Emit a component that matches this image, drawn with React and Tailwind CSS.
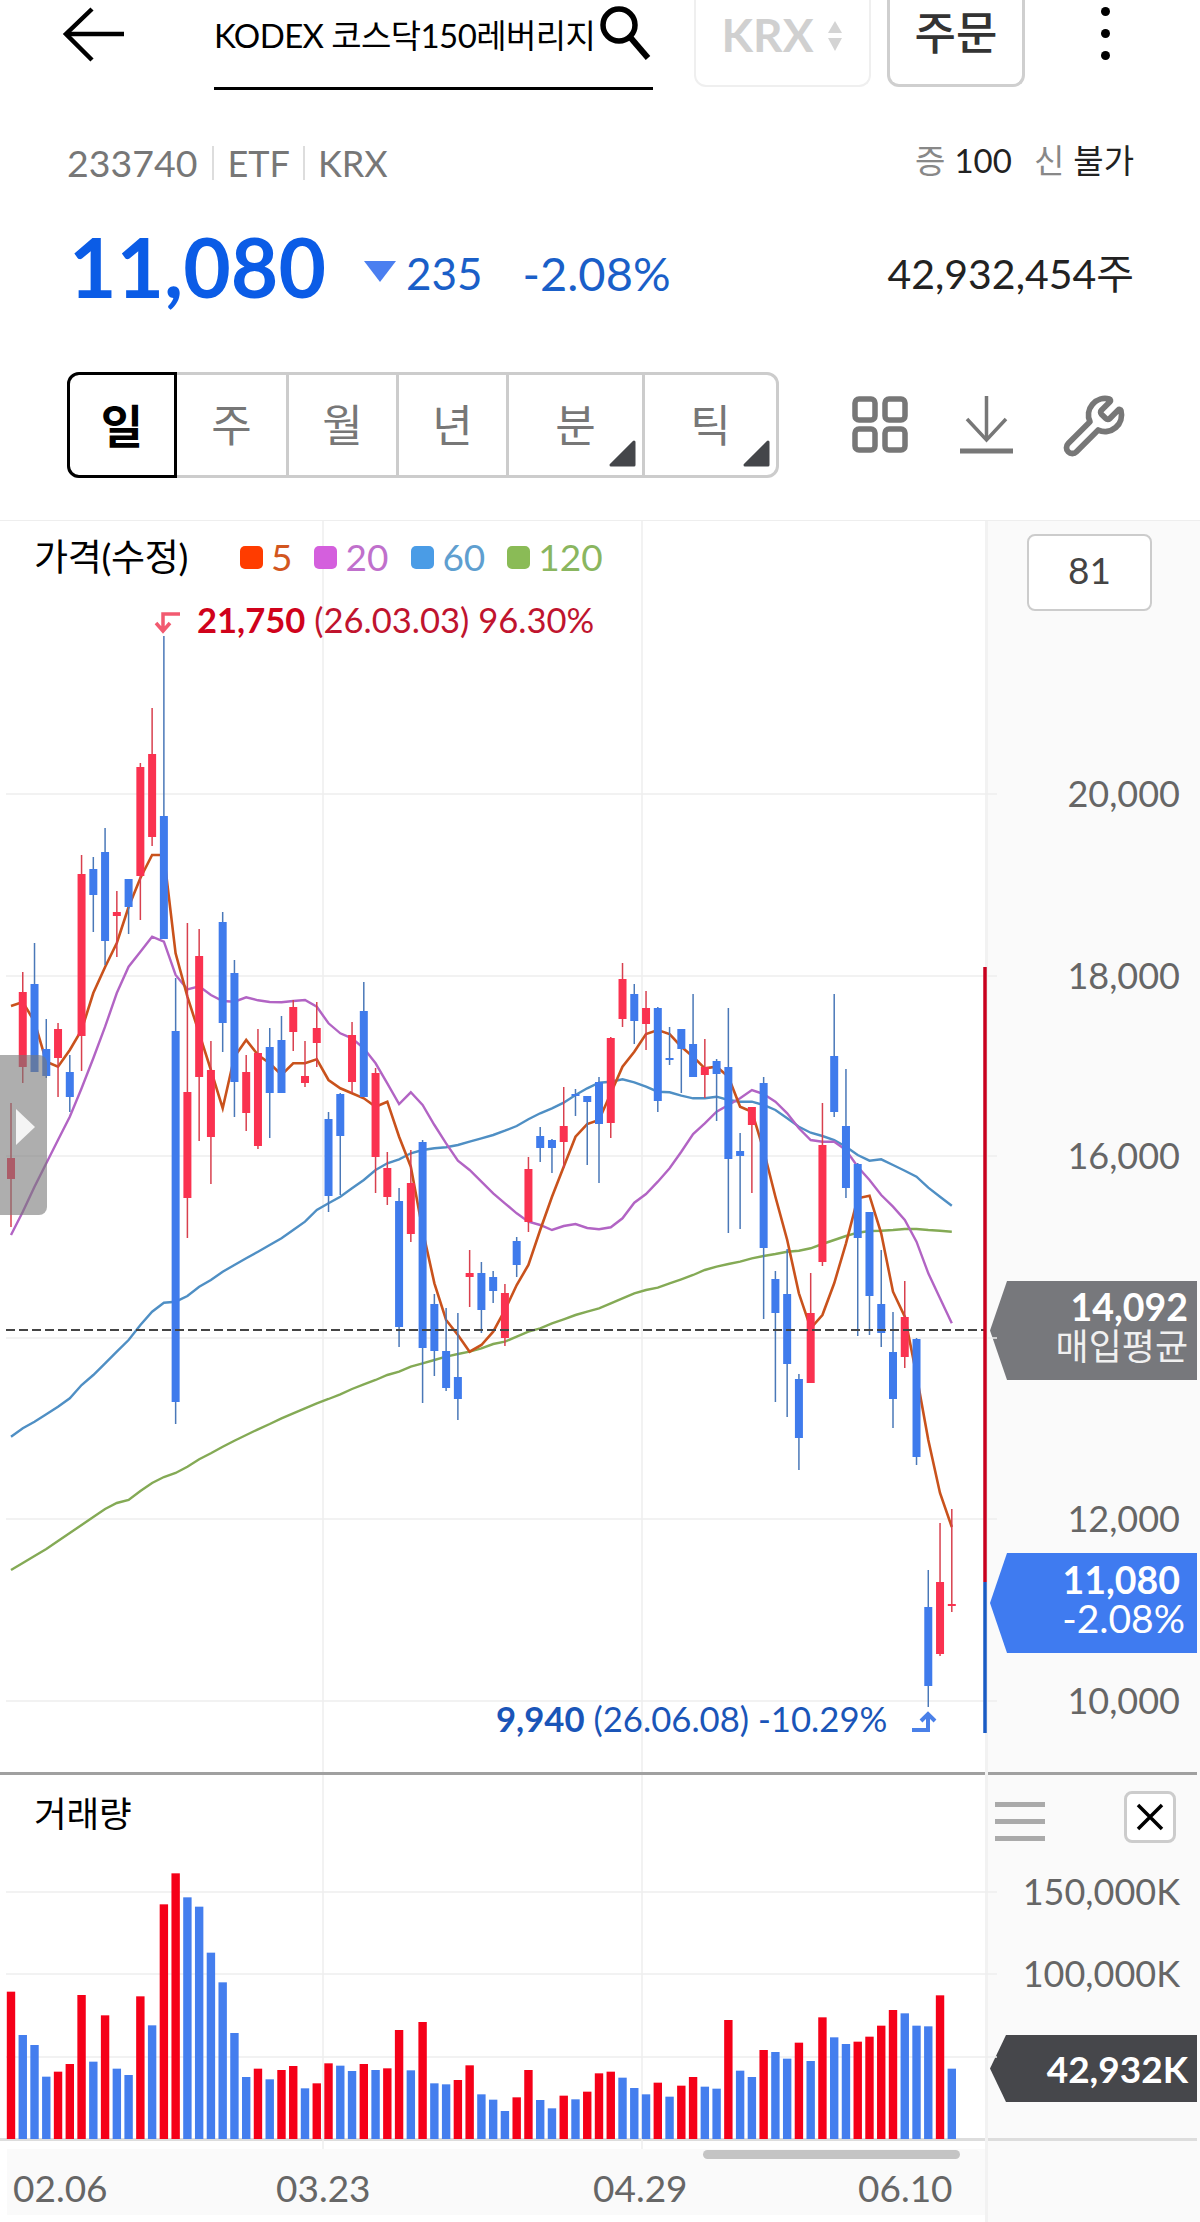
import React from 'react';
import { Wrench } from 'lucide-react';

// chart geometry, all y values are page pixels
const colX = (i) => 11 + 11.76 * i;
const z3 = (arr) => arr.map((z) => 1000 + z / 3);
const z4 = (arr) => arr.map((z) => 920 + z / 3);

const candles = [
  ['r', 1103, 1227, 1158, 1179], ['r', 972, 1083, 992, 1067], ['b', 943, 1072, 984, 1072], ['b', 1019, 1078, 1049, 1076],
  ['r', 1023, 1097, 1029, 1058], ['b', 1055, 1112, 1072, 1097], ['r', 855, 1071, 874, 1036], ['b', 857, 932, 869, 895],
  ['b', 828, 965, 852, 941], ['r', 891, 957, 912, 916], ['b', 879, 934, 879, 907], ['r', 763, 920, 767, 876],
  ['r', 708, 846, 754, 837], ['b', 636, 939, 816, 939], ['b', 978, 1424, 1031, 1402], ['r', 923, 1238, 1092, 1198],
  ['r', 929, 1141, 956, 1077], ['r', 1041, 1184, 1070, 1137], ['b', 912, 1052, 922, 1023], ['b', 960, 1117, 973, 1082],
  ['r', 1055, 1131, 1072, 1113], ['r', 1029, 1149, 1053, 1146], ['b', 1028, 1138, 1047, 1093], ['b', 1016, 1093, 1040, 1093],
  ['r', 1000, 1051, 1007, 1032], ['r', 1041, 1087, 1076, 1083], ['r', 1002, 1067, 1028, 1043], ['b', 1112, 1212, 1119, 1196],
  ['b', 1093, 1195, 1094, 1136], ['r', 1022, 1093, 1035, 1082], ['b', 982, 1097, 1011, 1097], ['r', 1068, 1193, 1073, 1157],
  ['r', 1152, 1205, 1168, 1197], ['b', 1188, 1347, 1201, 1327], ['r', 1150, 1242, 1183, 1234], ['b', 1140, 1403, 1142, 1348],
  ['b', 1294, 1376, 1304, 1351], ['b', 1308, 1391, 1351, 1388], ['b', 1313, 1420, 1377, 1399], ['r', 1250, 1307, 1273, 1277],
  ['b', 1262, 1333, 1273, 1310], ['b', 1271, 1303, 1277, 1291], ['r', 1284, 1346, 1293, 1338], ['b', 1237, 1277, 1241, 1265],
  ['r', 1157, 1232, 1169, 1222], ['b', 1127, 1162, 1136, 1148], ['b', 1139, 1173, 1140, 1148], ['r', 1087, 1168, 1126, 1142],
  ['b', 1089, 1116, 1094, 1096], ['b', 1096, 1165, 1096, 1102], ['b', 1077, 1183, 1082, 1124], ['r', 1037, 1138, 1038, 1123],
  ['r', 963, 1027, 979, 1019], ['b', 984, 1044, 994, 1021], ['r', 991, 1050, 1008, 1024], ['b', 1007, 1112, 1008, 1101],
  ['b', 1027, 1065, 1058, 1059], ['b', 1029, 1093, 1029, 1049], ['b', 994, 1077, 1044, 1077], ['r', 1039, 1098, 1067, 1075],
  ['b', 1059, 1121, 1061, 1074], ['b', 1008, 1233, 1067, 1159], ['b', 1133, 1229, 1151, 1156], ['r', 1107, 1193, 1107, 1125],
  ['b', 1077, 1319, 1083, 1248], ['b', 1271, 1402, 1279, 1313], ['b', 1249, 1417, 1294, 1364], ['b', 1374, 1470, 1379, 1438],
  ['r', 1273, 1383, 1313, 1383], ['r', 1103, 1266, 1145, 1262], ['b', 994, 1117, 1056, 1112], ['b', 1069, 1198, 1126, 1188],
  ['b', 1163, 1336, 1164, 1238], ['b', 1212, 1335, 1212, 1296], ['b', 1250, 1347, 1304, 1333], ['b', 1312, 1428, 1352, 1399],
  ['r', 1281, 1368, 1317, 1357], ['b', 1338, 1465, 1339, 1457], ['b', 1570, 1707, 1607, 1686], ['r', 1523, 1656, 1582, 1654],
  ['r', 1509, 1612, 1604, 1606],
];

const ma5 = [
  1006, 1002,
  ...z3([65, 185, 200, 150, 90, -21, -99, -171, -279, -366, -435, -435, -140, -10, 100, 210, 325, 170, 120, 165, 190, 225, 190, 190, 178, 240, 265, 280, 295, 320, 305, 410, 500, 690, 850, 960, 1005, 1055, 1035, 995]),
  ...z4([1170, 1095, 1035, 930, 830, 740, 650, 612, 600, 520, 440, 395, 342, 330, 342, 380, 410, 445, 440, 470, 560, 575, 690, 830, 960, 1120, 1225, 1185, 1090, 970, 835, 827, 940, 1115, 1190]),
  1375, 1440, 1493, 1527,
];
const ma20 = [
  ...z3([705, 635, 560, 490, 420, 350, 265, 175, 80, -21, -100, -145, -190, -175, -75, -32, -41, -15, 3, 5, -8, 1, 6, 7, 3, 0, 20, 70, 100, 115, 145, 190, 250, 312, 277, 315, 375, 430, 482, 510, 545, 580]),
  ...z4([850, 880, 905, 915, 930, 918, 912, 924, 928, 922, 895, 848, 822, 785, 745, 695, 642, 610, 575, 555, 535, 510, 522, 545, 580, 625, 660, 665, 665, 690, 740, 780, 825, 860, 900, 965, 1060, 1135, 1210]),
];
const ma60 = [
  ...z3([1310, 1285, 1265, 1243, 1220, 1195, 1155, 1125, 1090, 1055, 1020, 975, 935, 908, 905, 888, 860, 840, 815, 795, 775, 755, 735, 715, 690, 665, 630, 610, 590, 565, 540, 510, 490, 478, 460, 450, 445, 442, 435, 425, 415, 405]),
  ...z4([632, 618, 598, 580, 565, 548, 525, 505, 488, 485, 478, 487, 500, 515, 517, 527, 535, 535, 530, 540, 545, 545, 555, 570, 595, 620, 638, 648, 660, 680, 705, 722, 718, 735, 752, 770, 803, 830, 857]),
];
const ma120 = [
  1570, 1563, 1556, 1549, 1541, 1533, 1525, 1517, 1509, 1503, 1500, 1491, 1483, 1477, 1473,
  ...z3([1400, 1378, 1360, 1340, 1322, 1305, 1288, 1272, 1255, 1240, 1225, 1210, 1197, 1183, 1167, 1153, 1140, 1125, 1115, 1100, 1090, 1080, 1070, 1062, 1055, 1045, 1032]),
  ...z4([1265, 1250, 1235, 1225, 1210, 1198, 1185, 1175, 1165, 1150, 1135, 1120, 1110, 1103, 1090, 1078, 1065, 1050, 1040, 1032, 1025, 1015, 1008, 1002, 995, 992, 985, 972, 960, 948, 938, 933, 932, 930, 927, 927, 930, 932, 935]),
];

const volumes = [
  ['r', 755], ['b', 885], ['b', 915], ['b', 1010], ['r', 995], ['r', 972], ['r', 765], ['b', 965], ['r', 826], ['b', 986],
  ['b', 1005], ['r', 769], ['b', 856], ['r', 493], ['r', 400], ['b', 472], ['b', 500], ['b', 638], ['b', 727], ['b', 879],
  ['b', 1011], ['r', 986], ['b', 1018], ['r', 990], ['r', 978], ['b', 1045], ['r', 1030], ['r', 970], ['b', 977], ['b', 993],
  ['r', 972], ['b', 990], ['r', 985], ['r', 870], ['b', 991], ['r', 846], ['b', 1030], ['b', 1033], ['r', 1020], ['r', 976],
  ['b', 1063], ['b', 1079], ['b', 1113], ['r', 1072], ['r', 990], ['b', 1080], ['b', 1105], ['r', 1067], ['b', 1078], ['r', 1055],
  ['r', 1000], ['r', 995], ['b', 1013], ['b', 1044], ['b', 1063], ['r', 1028], ['b', 1070], ['r', 1037], ['r', 1011], ['b', 1040],
  ['b', 1046], ['r', 840], ['b', 992], ['b', 1011], ['r', 930], ['b', 936], ['b', 956], ['r', 908], ['b', 963], ['r', 832],
  ['b', 892], ['b', 912], ['r', 905], ['r', 890], ['r', 857], ['r', 810], ['b', 820], ['b', 857], ['b', 859], ['r', 766], ['b', 986],
];

const priceTicks = [
  { label: '20,000', y: 794 },
  { label: '18,000', y: 976 },
  { label: '16,000', y: 1156 },
  { label: '12,000', y: 1519 },
  { label: '10,000', y: 1701 },
];
const legend = [
  { label: '5', box: 'bg-[#ff3c00]', text: 'text-[#d2561e]', gap: 'ml-[49px]' },
  { label: '20', box: 'bg-[#d45fdd]', text: 'text-[#c070cc]', gap: 'ml-[22px]' },
  { label: '60', box: 'bg-[#4a9ce6]', text: 'text-[#5f9fd0]', gap: 'ml-[23px]' },
  { label: '120', box: 'bg-[#8abb56]', text: 'text-[#8ab65f]', gap: 'ml-[22px]' },
];
const tabs = [
  { label: '일', w: 'w-[110px]', active: true },
  { label: '주', w: 'w-[112px]' },
  { label: '월', w: 'w-[110px]' },
  { label: '년', w: 'w-[110px]' },
  { label: '분', w: 'w-[136px]', corner: true },
  { label: '틱', w: 'w-[131px]', corner: true, last: true },
];

const toPoints = (ys) => ys.map((y, i) => `${colX(i).toFixed(1)},${y.toFixed(1)}`).join(' ');

const App = () => {
  return (
    <div className="w-[1200px] h-[2222px] overflow-hidden bg-white font-['Lato','Noto_Sans_CJK_KR',sans-serif]">
      {/* Top bar */}
      <div className="flex h-[90px]">
        <div className="w-[214px] shrink-0">
          <svg width="214" height="70" fill="none" stroke="#000" strokeWidth="4.5">
            <path d="M124 34H68" />
            <path d="M92 9L66 34L92 60" />
          </svg>
        </div>
        <div className="flex w-[439px] h-[90px] border-b-[3px] border-black">
          <span className="mt-[15px] w-[384px] text-[33px] leading-[40px] whitespace-nowrap tracking-[-0.6px] text-black">KODEX 코스닥150레버리지</span>
          <svg width="54" height="64" fill="none" stroke="#000" strokeWidth="5.5">
            <circle cx="21" cy="25" r="16" />
            <path d="M32 37L50 58" strokeWidth="6" />
          </svg>
        </div>
        <div className="ml-[41px] flex items-start justify-center w-[177px] h-[87px] border-2 border-t-0 border-[#efefef] rounded-b-xl">
          <span className="mt-[10px] text-[46px] leading-[50px] font-bold text-[#d0d0d0]">KRX</span>
          <svg className="ml-[14px] mt-[21px]" width="16" height="30" fill="#d4d4d4">
            <path d="M8 0L15 12H1Z" />
            <path d="M8 30L15 17H1Z" />
          </svg>
        </div>
        <div className="ml-[16px] flex items-start justify-center w-[138px] h-[87px] border-[3px] border-t-0 border-[#cfcfcf] rounded-b-xl">
          <span className="mt-[8px] text-[45px] leading-[50px] font-medium text-[#333]">주문</span>
        </div>
        <div className="ml-[76px] flex flex-col gap-[13px] pt-[7px]">
          <div className="w-[9px] h-[9px] rounded-full bg-black" />
          <div className="w-[9px] h-[9px] rounded-full bg-black" />
          <div className="w-[9px] h-[9px] rounded-full bg-black" />
        </div>
      </div>

      {/* Code + market row */}
      <div className="mt-[52px] flex h-[42px] items-center justify-between pl-[67px] pr-[66px]">
        <div className="flex items-center text-[36px] leading-[42px] text-[#777]">
          <span className="text-[37.5px]">233740</span>
          <span className="mx-[14px] h-[34px] w-[2px] bg-[#ddd]" />
          <span>ETF</span>
          <span className="mx-[13px] h-[34px] w-[2px] bg-[#ddd]" />
          <span>KRX</span>
        </div>
        <div className="-mt-[6px] flex items-center text-[33px] leading-[42px] text-[#222]">
          <span className="text-[#888]">증</span>
          <span className="ml-[9px]">100</span>
          <span className="ml-[22px] text-[#888]">신</span>
          <span className="ml-[9px]">불가</span>
        </div>
      </div>

      {/* Price row */}
      <div className="mt-[48px] flex h-[74px] items-center pl-[69px] pr-[66px]">
        <span className="-mt-[6px] text-[82px] leading-[74px] font-bold text-[#0b5ce6]">11,080</span>
        <svg className="ml-[38px] mt-[5px]" width="32" height="22" fill="#4b7ff0">
          <path d="M0 0H32L16 21Z" />
        </svg>
        <span className="ml-[10px] mt-[7px] text-[44px] leading-[50px] text-[#1a5fc8]">235</span>
        <span className="ml-[40px] mt-[7px] text-[47px] leading-[50px] text-[#1a5fc8]">-2.08%</span>
        <span className="ml-auto mt-[9px] text-[41px] leading-[50px] text-[#222]">42,932,454주</span>
      </div>

      {/* Period tabs + tools */}
      <div className="mt-[66px] flex h-[106px] pl-[67px]">
        <div className="flex w-[712px] h-[106px] rounded-xl border-[3px] border-[#ccc]">
          {tabs.map((tab) => (
            <div
              key={tab.label}
              className={
                tab.active
                  ? `${tab.w} -my-[3px] -ml-[3px] flex items-center justify-center rounded-l-xl border-[3px] border-black text-[46px] font-bold text-black`
                  : `${tab.w} relative flex items-center justify-center text-[44px] text-[#777] ${tab.last ? '' : 'border-r-[3px] border-[#ccc]'}`
              }
            >
              {tab.label}
              {tab.corner && (
                <svg className="absolute right-[6px] bottom-[8px]" width="28" height="28" fill="#44464a" stroke="#44464a" strokeWidth="3" strokeLinejoin="round">
                  <path d="M26 3V26H3Z" />
                </svg>
              )}
            </div>
          ))}
        </div>
        <svg className="ml-[73px] mt-[24px]" width="56" height="57" fill="none" stroke="#777" strokeWidth="5.5">
          <rect x="3" y="3" width="20" height="21" rx="4" />
          <rect x="33" y="3" width="20" height="21" rx="4" />
          <rect x="3" y="33" width="20" height="21" rx="4" />
          <rect x="33" y="33" width="20" height="21" rx="4" />
        </svg>
        <svg className="ml-[52px] mt-[23px]" width="53" height="60" fill="none" stroke="#777" strokeWidth="3.5">
          <path d="M26.5 1V44" />
          <path d="M7 24L26.5 45L46 24" />
          <path d="M0 56H53" strokeWidth="5" />
        </svg>
        <Wrench className="ml-[48px] mt-[21px]" size={66} color="#777" strokeWidth={2.1} />
      </div>

      <div className="mt-[42px] h-[1px] bg-[#eee]" />

      <div className="flex h-[1701px]">
        {/* Plot column */}
        <div className="relative z-10 w-[985px] shrink-0">
          <div className="relative h-[1251px]">
            <svg className="block overflow-visible" width="985" height="1251" viewBox="0 521 985 1251" fill="none">
              {priceTicks.concat({ y: 1338 }).map((t) => (
                <path key={t.y} d={`M6 ${t.y}H997`} stroke="#eee" strokeWidth="1.5" />
              ))}
              <path d="M323 521V1772M642 521V1772" stroke="#eee" strokeWidth="1.5" />
              <polyline points={toPoints(ma120)} stroke="#84aa55" strokeWidth="2.4" />
              <polyline points={toPoints(ma60)} stroke="#4f8fc4" strokeWidth="2.4" />
              <polyline points={toPoints(ma20)} stroke="#b264c4" strokeWidth="2.4" />
              <polyline points={toPoints(ma5)} stroke="#c9521c" strokeWidth="2.6" />
              {candles.map(([c, wt, wb, bt, bb], i) => {
                const x = colX(i);
                return (
                  <g key={i}>
                    <path d={`M${x} ${wt}V${wb}`} stroke={c === 'r' ? '#d8404e' : '#4a78b8'} strokeWidth="1.5" />
                    <rect x={x - 4} y={bt} width="8" height={Math.max(bb - bt, 2)} fill={c === 'r' ? '#fa3250' : '#3f7bec'} />
                  </g>
                );
              })}
              <path d="M6 1330H985" stroke="#444" strokeWidth="2" strokeDasharray="9 4" />
              <path d="M985 967V1582" stroke="#c8001e" strokeWidth="3.5" />
              <path d="M985 1582V1733" stroke="#1a5bc4" strokeWidth="3.5" />
              <path d="M180 614H163V630M156 623L163 631L170 623" stroke="#f25a70" strokeWidth="3.5" />
              <path d="M912 1730H928V1715M921 1721L928 1714L935 1721" stroke="#4a80e8" strokeWidth="4" />
            </svg>

            {/* Legend */}
            <div className="absolute left-[34px] top-[14px] flex items-center h-[44px]">
              <span className="w-[157px] text-[37px] leading-[44px] -tracking-[0.3px] whitespace-nowrap text-black">가격(수정)</span>
              {legend.map((item) => (
                <div key={item.label} className={`flex items-center ${item.gap}`}>
                  <div className={`w-[23px] h-[23px] rounded-[5px] ${item.box}`} />
                  <span className={`ml-[8px] text-[37px] leading-[44px] ${item.text}`}>{item.label}</span>
                </div>
              ))}
            </div>

            {/* High / low markers */}
            <div className="absolute left-[197px] top-[79px] text-[34.6px] leading-[40px] whitespace-nowrap text-[#c0142e]">
              <span className="font-bold text-[#d0021b]">21,750</span> (26.03.03) 96.30%
            </div>
            <div className="absolute left-[496px] top-[1178px] text-[34.7px] leading-[40px] whitespace-nowrap text-[#1a55b8]">
              <span className="font-bold">9,940</span> (26.06.08) -10.29%
            </div>

            {/* Side drawer handle */}
            <div className="absolute left-0 top-[534px] flex items-center w-[47px] h-[160px] rounded-r-lg bg-[#787878]/60">
              <svg className="ml-[16px] -mt-[16px]" width="19" height="36" fill="#f4f4f4">
                <path d="M0 0L19 18L0 36Z" />
              </svg>
            </div>
          </div>

          <div className="h-[3px] bg-[#a0a0a0]" />

          {/* Volume pane */}
          <div className="relative h-[363px]">
            <svg className="block overflow-visible" width="985" height="363" viewBox="0 1775 985 363" fill="none">
              {[1892, 1974, 2057].map((y) => (
                <path key={y} d={`M6 ${y}H997`} stroke="#eee" strokeWidth="1.5" />
              ))}
              <path d="M323 1775V2159M642 1775V2159" stroke="#eee" strokeWidth="1.5" />
              {volumes.map(([c, z], i) => {
                const top = 1740 + z / 3;
                return <rect key={i} x={colX(i) - 4.2} y={top} width="8.4" height={2139 - top} fill={c === 'r' ? '#f50018' : '#447eee'} />;
              })}
            </svg>
            <span className="absolute left-[34px] top-[17px] text-[35.5px] leading-[44px] -tracking-[0.2px] text-black">거래량</span>
          </div>

          <div className="h-[3px] bg-[#ddd]" />

          {/* X axis */}
          <div className="relative mt-[8px] ml-[7px] h-[66px] bg-[#fafafa] text-[37px] leading-[78px] text-[#666]">
            <span className="absolute left-[6px]">02.06</span>
            <span className="absolute left-[269px]">03.23</span>
            <span className="absolute left-[586px]">04.29</span>
            <span className="absolute left-[851px]">06.10</span>
            <div className="absolute left-[696px] top-[1px] w-[257px] h-[9px] rounded-full bg-[#c4c4c4]" />
          </div>
        </div>

        {/* Axis column */}
        <div className="flex-1 border-l-[3px] border-[#f2f2f2] bg-[#fafafa]">
          <div className="relative h-[1251px]">
            <div className="absolute left-[39px] top-[13px] flex items-center justify-center w-[125px] h-[77px] rounded-lg border-2 border-[#ccc] bg-white pb-[5px] text-[37px] text-[#444]">81</div>
            {priceTicks.map((t) => (
              <span
                key={t.label}
                className="absolute right-[20px] -translate-y-1/2 text-[36px] leading-[40px] text-[#666]"
                style={{ top: t.y - 522 }}
              >
                {t.label}
              </span>
            ))}
            <div className="absolute left-[2px] top-[760px] flex flex-col items-end justify-center w-[207px] h-[99px] pb-[9px] pr-[9px] bg-[#77787c] text-white [clip-path:polygon(0_50%,17px_0,100%_0,100%_100%,17px_100%)]">
              <span className="text-[37.5px] leading-[40px] font-bold">14,092</span>
              <span className="text-[36px] leading-[38px] text-[#f0f0f0]">매입평균</span>
            </div>
            <div className="absolute left-[2px] top-[1032px] flex flex-col items-end justify-center w-[207px] h-[100px] pb-[9px] pr-[12px] bg-[#3f7bf0] text-white [clip-path:polygon(0_50%,17px_0,100%_0,100%_100%,17px_100%)]">
              <span className="pr-[5px] text-[37.5px] leading-[38px] font-bold">11,080</span>
              <span className="text-[39px] leading-[38px]">-2.08%</span>
            </div>
          </div>

          <div className="h-[3px] w-[209px] bg-[#a0a0a0]" />

          <div className="relative h-[363px]">
            <div className="absolute left-[7px] top-[27px] flex flex-col gap-[12px] w-[50px]">
              <div className="h-[5px] bg-[#aaa]" />
              <div className="h-[5px] bg-[#aaa]" />
              <div className="h-[5px] bg-[#aaa]" />
            </div>
            <div className="absolute left-[136px] top-[16px] flex items-center justify-center w-[52px] h-[52px] rounded-lg border-[3px] border-[#ccc] bg-white">
              <svg width="30" height="30" fill="none" stroke="#000" strokeWidth="3.5">
                <path d="M3 3L27 27M27 3L3 27" />
              </svg>
            </div>
            <span className="absolute right-[20px] top-[96px] text-[36px] leading-[40px] text-[#666]">150,000K</span>
            <span className="absolute right-[20px] top-[178px] text-[36px] leading-[40px] text-[#666]">100,000K</span>
            <div className="absolute left-[2px] top-[260px] flex items-center justify-end w-[207px] h-[67px] pr-[9px] bg-[#46474b] text-[37px] font-bold text-white [clip-path:polygon(0_50%,16px_0,100%_0,100%_100%,16px_100%)]">
              42,932K
            </div>
          </div>

          <div className="h-[3px] w-[209px] bg-[#ddd]" />
        </div>
      </div>
    </div>
  );
};

export default App;
